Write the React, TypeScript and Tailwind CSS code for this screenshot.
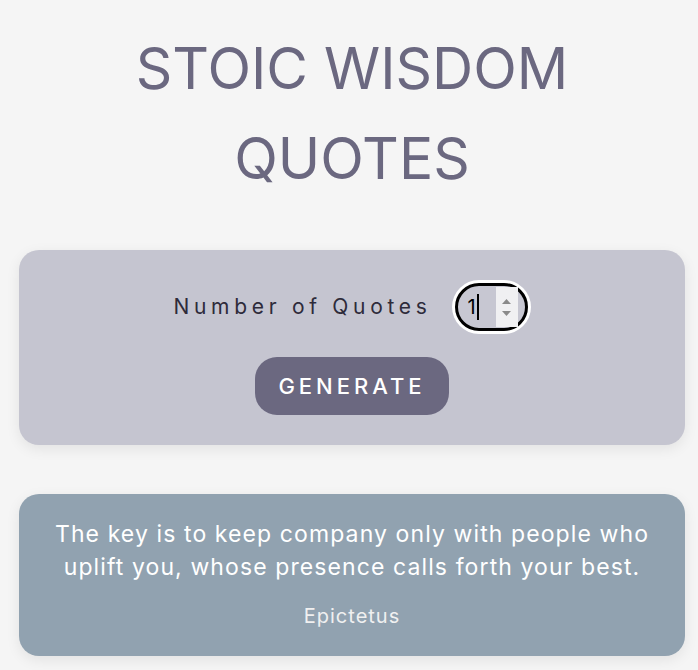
import React from "react";

export default function App() {
  return (
    <div className="min-h-[670px] bg-[#f5f5f5] pl-[19px] pt-[24px] pb-4" style={{ fontFamily: "Inter, 'Open Sans', sans-serif" }}>
      <div className="w-[666px]">
        <h1 className="text-center text-[57px] leading-[90px] font-normal text-[#6b6880] mx-auto max-w-[480px]">
          STOIC WISDOM QUOTES
        </h1>
      </div>
      <div className="mt-[46px] w-[666px] rounded-[20px] bg-[#c5c5d0] shadow-[0_4px_14px_rgba(0,0,0,0.08)] pt-[30px] pb-[30px] flex flex-col items-center">
        <div className="flex items-center gap-[20px]">
          <label className="text-[21px] tracking-[4.7px] text-[#2e2b3a]">Number of Quotes</label>
          <div className="shrink-0 rounded-full p-[3px] bg-white w-[79px] h-[54px]">
            <div className="flex items-center rounded-full border-[3px] border-black bg-[#c7c7d2] h-full w-full pl-[10px]">
              <span className="text-[20px] text-black leading-none">1</span>
              <span className="w-[2px] h-[26px] bg-black ml-[1px]"></span>
              <div className="ml-auto self-stretch my-[1px] flex flex-col items-center justify-center gap-[7px] bg-[#f0f0f2] w-[22px] mr-[7px]">
                <svg width="9" height="5" viewBox="0 0 9 5"><path d="M0 5 L4.5 0 L9 5 Z" fill="#8a8a8a" /></svg>
                <svg width="9" height="5" viewBox="0 0 9 5"><path d="M0 0 L4.5 5 L9 0 Z" fill="#8a8a8a" /></svg>
              </div>
            </div>
          </div>
        </div>
        <button className="mt-[23px] h-[58px] w-[194px] rounded-[22px] bg-[#6b6880] text-white text-[22px] tracking-[4px] font-medium">
          GENERATE
        </button>
      </div>
      <div className="mt-[49px] w-[666px] rounded-[20px] bg-[#91a2b0] shadow-[0_4px_14px_rgba(0,0,0,0.08)] pt-[24px] pb-[26px] px-6 flex flex-col items-center">
        <p className="text-center text-white text-[23px] leading-[33px] tracking-[1.1px] max-w-[600px]">
          The key is to keep company only with people who uplift you, whose presence calls forth your best.
        </p>
        <p className="mt-[18px] text-[#f0f0f0] text-[20px] leading-[28px] tracking-[1px]">Epictetus</p>
      </div>
    </div>
  );
}
